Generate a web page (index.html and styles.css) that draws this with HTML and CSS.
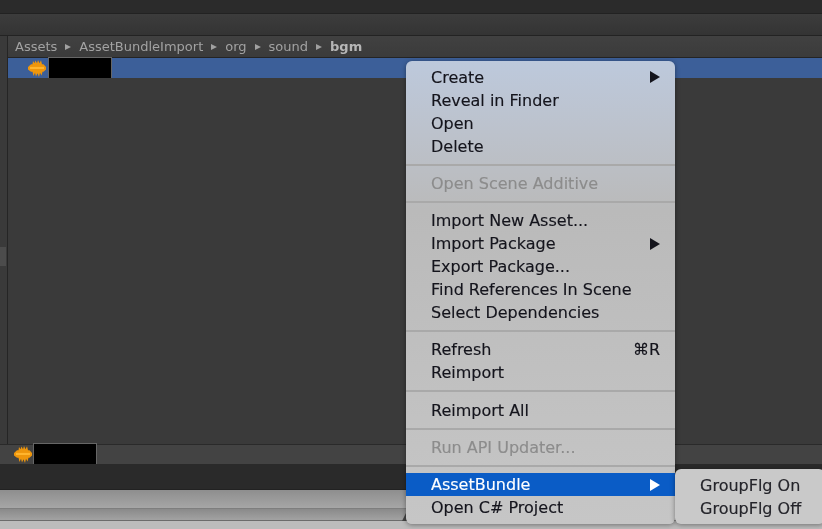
FILE: index.html
```html
<!DOCTYPE html>
<html lang="en">
<head>
<meta charset="utf-8">
<title>Project context menu</title>
<link rel="stylesheet" href="styles.css">
</head>
<body>
<svg class="defs" width="0" height="0" aria-hidden="true">
  <symbol id="wave" viewBox="0 0 18 16" preserveAspectRatio="none">
    <path d="M0 6.5 L3 4 L4.5 4 L5 1 L6.5 3 L7.5 0.5 L9 3 L10 0 L11.5 3 L13 0.3 L14 4 L15.5 4 L18 6.5 L18 9 L15.5 11 L14.5 11 L13.5 14.5 L12 12 L11 16 L9.5 12.5 L8 15.5 L7 12 L5.5 15 L4.5 11 L3 11 L0 9 Z" fill="#ee960c"/>
    <path d="M2 6.5 H16 V8.5 H2 Z" fill="#ffb52e"/>
  </symbol>
</svg>
<div class="window">
  <div class="topbar"></div>
  <div class="toolbar"></div>
  <div class="panel">
    <div class="sidebar"><div class="scroll-tab"></div></div>
    <div class="main">
      <div class="crumbs">
        <span>Assets</span><i class="sep"></i><span>AssetBundleImport</span><i class="sep"></i><span>org</span><i class="sep"></i><span>sound</span><i class="sep"></i><b>bgm</b>
      </div>
      <div class="row selected">
        <svg class="wave"><use href="#wave"/></svg>
        <div class="redact"></div>
      </div>
      <div class="list"></div>
    </div>
  </div>
  <div class="footer">
    <svg class="wave"><use href="#wave"/></svg>
    <div class="redact"></div>
  </div>
  <div class="statusbar"></div>
  <div class="desk"><div class="desk-a"></div><div class="desk-b"></div><div class="desk-c"></div></div>
</div>
<div class="grip"></div>
<div class="menu">
  <div class="item"><span>Create</span><i class="arrow"></i></div>
  <div class="item"><span>Reveal in Finder</span></div>
  <div class="item"><span>Open</span></div>
  <div class="item"><span>Delete</span></div>
  <hr class="rule">
  <div class="item off"><span>Open Scene Additive</span></div>
  <hr class="rule">
  <div class="item"><span>Import New Asset...</span></div>
  <div class="item"><span>Import Package</span><i class="arrow"></i></div>
  <div class="item"><span>Export Package...</span></div>
  <div class="item"><span>Find References In Scene</span></div>
  <div class="item"><span>Select Dependencies</span></div>
  <hr class="rule">
  <div class="item"><span>Refresh</span><span class="key">⌘R</span></div>
  <div class="item"><span>Reimport</span></div>
  <hr class="rule">
  <div class="item"><span>Reimport All</span></div>
  <hr class="rule">
  <div class="item off"><span>Run API Updater...</span></div>
  <hr class="rule">
  <div class="item active"><span>AssetBundle</span><i class="arrow"></i></div>
  <div class="item"><span>Open C# Project</span></div>
</div>
<div class="submenu">
  <div class="item"><span>GroupFlg On</span></div>
  <div class="item"><span>GroupFlg Off</span></div>
</div>
</body>
</html>
```

FILE: styles.css
```css
* { box-sizing: border-box; }
html, body { margin: 0; height: 100%; overflow: hidden; background: #2a2a2a; }
body { position: relative; width: 822px; height: 529px; font-family: "DejaVu Sans", "Liberation Sans", sans-serif; }
.defs { position: absolute; }

.window { display: flex; flex-direction: column; height: 529px; filter: blur(0.4px); }
.topbar { height: 14px; background: #2b2b2b; border-bottom: 1px solid #222; }
.toolbar { height: 22px; background: linear-gradient(#3c3c3c, #343434); border-bottom: 1px solid #232323; }
.panel { display: flex; flex: none; height: 408px; background: #3a3a3a; }
.sidebar { width: 8px; background: #3a3a3a; border-right: 1px solid #252525; padding-top: 211px; }
.scroll-tab { height: 19px; background: #4c4c4c; margin-right: 1px; }
.main { flex: 1; display: flex; flex-direction: column; }
.crumbs { height: 22px; display: flex; align-items: center; gap: 8px; padding-left: 7px; background: linear-gradient(#414141, #3b3b3b); border-bottom: 1px solid #242424; color: #a2a2a2; font-size: 13px; }
.crumbs b { font-weight: 700; color: #b6b6b6; }
.sep { width: 0; height: 0; border-left: 6px solid #a0a0a0; border-top: 3.5px solid transparent; border-bottom: 3.5px solid transparent; }
.row { height: 20px; display: flex; align-items: center; }
.selected { background: #3c5f99; padding-left: 20px; gap: 2px; }
.list { flex: 1; background: #3a3a3a; }
.wave { width: 18px; height: 17px; flex: none; }
.redact { width: 64px; height: 23px; background: #000; border: 1px solid #666; flex: none; }
.footer { height: 20px; background: #434343; border-top: 1px solid #2a2a2a; display: flex; align-items: center; padding-left: 14px; gap: 1px; }
.statusbar { height: 26px; background: #2a2a2a; border-bottom: 1px solid #222; }
.desk { flex: 1; display: flex; flex-direction: column; }
.desk-a { height: 19px; background: linear-gradient(#8e8e8e, #a6a6a6); border-bottom: 1px solid #7e7e7e; }
.desk-b { height: 12px; background: linear-gradient(#8a8a8a, #a2a2a2); border-bottom: 1px solid #6c6c6c; }
.desk-c { flex: 1; background: #bcbcbc; }
.grip { position: absolute; left: 402px; top: 511px; width: 0; height: 0; border-bottom: 10px solid #444; border-left: 5px solid transparent; }

.menu, .submenu { position: absolute; color: #14141c; font-size: 16px; -webkit-text-stroke: 0.15px currentColor; filter: blur(0.35px); box-shadow: 0 1px 5px rgba(0,0,0,.4); }
.menu { left: 406px; top: 61px; width: 269px; height: 463px; padding-top: 4.5px; border-radius: 6px; background: linear-gradient(#bdc9dc 0, #bcc2cc 70px, #bababa 150px, #c6c6c6 100%); }
.submenu { left: 675px; top: 469px; width: 150px; height: 55px; padding-top: 4.5px; border-radius: 6px; background: #c9c9c9; color: #24242a; }
.item { height: 23px; padding: 0 15px 0 25px; display: flex; justify-content: space-between; align-items: center; white-space: nowrap; }
.off { color: #8c8c8c; }
.active { background: #0a5cc6; color: #fff; }
.rule { margin: 6.15px 0; height: 2px; border: 0; background: #a9a9a9; }
.arrow { width: 0; height: 0; border-left: 10px solid currentColor; border-top: 6px solid transparent; border-bottom: 6px solid transparent; }
```
